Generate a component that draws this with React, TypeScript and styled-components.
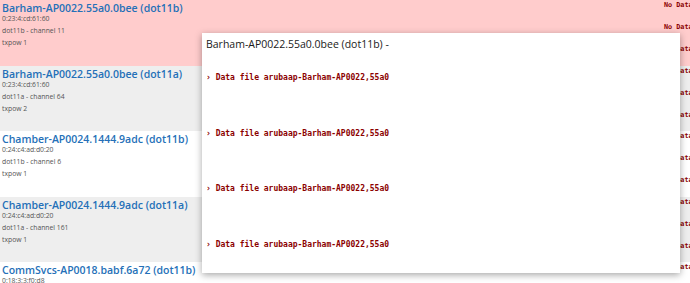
import { styled, createGlobalStyle } from 'styled-components';

const GlobalStyle = createGlobalStyle`
    html, body {
        margin: 0;
        padding: 0;
        background: #fff;
        overflow: hidden;
    }
    body {
        font-family: 'Open Sans', 'DejaVu Sans', Verdana, sans-serif;
    }
`;

type Radio = {
    name: string;
    mac: string;
    band: string;
    channel: number;
    txpow: number;
    tone: 'alert' | 'odd' | 'even';
};

const radios: Radio[] = [
    { name: 'Barham-AP0022.55a0.0bee (dot11b)', mac: '0:23:4:cd:61:60', band: 'dot11b', channel: 11, txpow: 1, tone: 'alert' },
    { name: 'Barham-AP0022.55a0.0bee (dot11a)', mac: '0:23:4:cd:61:60', band: 'dot11a', channel: 64, txpow: 2, tone: 'even' },
    { name: 'Chamber-AP0024.1444.9adc (dot11b)', mac: '0:24:c4:ad:d0:20', band: 'dot11b', channel: 6, txpow: 1, tone: 'odd' },
    { name: 'Chamber-AP0024.1444.9adc (dot11a)', mac: '0:24:c4:ad:d0:20', band: 'dot11a', channel: 161, txpow: 1, tone: 'even' },
    { name: 'CommSvcs-AP0018.babf.6a72 (dot11b)', mac: '0:18:3:3:f0:d8', band: 'dot11b', channel: 1, txpow: 1, tone: 'odd' },
];

const bg = { alert: '#ffcccc', odd: '#ffffff', even: '#eeeeee' };

export default function App() {
    return (
        <>
            <GlobalStyle />
            <Page>
                {radios.map((r, i) => (
                    <Row key={i} $tone={r.tone}>
                        <Info>
                            <Title>{r.name}</Title>
                            <Meta>{r.mac}</Meta>
                            <Meta>
                                {r.band} - channel {r.channel}
                            </Meta>
                            <Meta>txpow {r.txpow}</Meta>
                        </Info>
                        <Status>
                            <div>No Data</div>
                            <div>No Data</div>
                            <div>No Data</div>
                        </Status>
                    </Row>
                ))}
                <Popup>
                    <PopupTitle>Barham-AP0022.55a0.0bee (dot11b) -</PopupTitle>
                    <DataList>
                        {[0, 1, 2, 3].map((n) => (
                            <DataLine key={n}>› Data file arubaap-Barham-AP0022,55a0</DataLine>
                        ))}
                    </DataList>
                </Popup>
            </Page>
        </>
    );
}

const Page = styled.div`
    position: relative;
    width: 690px;
    height: 283px;
    overflow: hidden;
`;

const Row = styled.div<{ $tone: 'alert' | 'odd' | 'even' }>`
    display: flex;
    height: 65.5px;
    background: ${(p) => bg[p.$tone]};
`;

const Info = styled.div`
    flex: 0 0 664px;
    padding: 1px 0 0 2px;
    box-sizing: border-box;
`;

const Title = styled.div`
    font-size: 10.5px;
    font-weight: 600;
    line-height: 14px;
    margin-bottom: -2px;
    color: #2470b8;
    white-space: nowrap;
`;

const Meta = styled.div`
    font-size: 6.8px;
    line-height: 12px;
    color: #555;
    white-space: nowrap;
`;

const Status = styled.div`
    margin-top: -6px;
    font-family: 'DejaVu Sans Mono', 'Liberation Mono', monospace;
    font-size: 6.8px;
    font-weight: bold;
    color: #8b0000;
    white-space: nowrap;

    div {
        height: 22px;
        line-height: 22px;
    }
`;

const Popup = styled.div`
    position: absolute;
    left: 202px;
    top: 33px;
    width: 478px;
    height: 240px;
    background: #fff;
    box-shadow: 0 2px 7px rgba(0, 0, 0, 0.35);
    box-sizing: border-box;
    padding: 4px 4px;
`;

const PopupTitle = styled.div`
    font-size: 10.5px;
    font-weight: 500;
    line-height: 14px;
    color: #1a1a1a;
    white-space: nowrap;
`;

const DataList = styled.div`
    display: flex;
    flex-direction: column;
    gap: 43.5px;
    padding-top: 21px;
`;

const DataLine = styled.div`
    font-family: 'DejaVu Sans Mono', 'Liberation Mono', monospace;
    font-size: 8px;
    font-weight: bold;
    line-height: 12px;
    color: #8b0000;
    white-space: nowrap;
`;
